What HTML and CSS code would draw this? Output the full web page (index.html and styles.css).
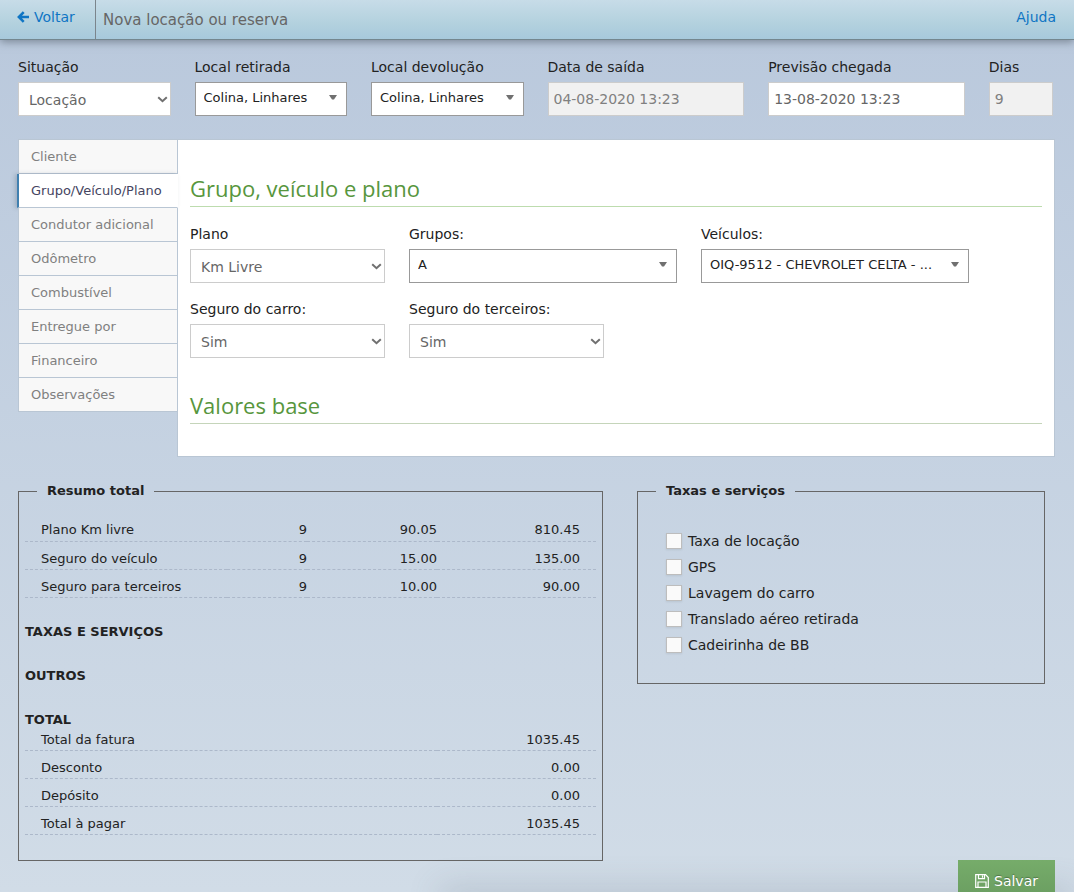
FILE: index.html
```html
<!DOCTYPE html>
<html lang="pt-BR">
<head>
<meta charset="utf-8">
<meta name="viewport" content="width=device-width, initial-scale=1">
<title>Nova locação ou reserva</title>
<link rel="stylesheet" href="styles.css">
</head>
<body>
<svg class="sprite" aria-hidden="true">
  <symbol id="chevron" viewBox="0 0 11 7"><path d="M1.200 1.200 5.500 5.200 9.800 1.200" fill="none" stroke="currentColor" stroke-width="2"/></symbol>
  <symbol id="caret" viewBox="0 0 8 5"><path d="M0 0h8L5 4.500H3z" fill="currentColor"/></symbol>
</svg>

<header class="topbar">
  <a class="back" href="#"><svg viewBox="0 0 12 12" aria-hidden="true"><path d="M12 6H2M6.700 1.200 1.900 6l4.800 4.800" fill="none" stroke="currentColor" stroke-width="2.600"/></svg>Voltar</a>
  <h1 class="page-title">Nova locação ou reserva</h1>
  <a class="help" href="#">Ajuda</a>
</header>

<main>
  <form class="filters">
    <div class="field"><label for="status">Situação</label>
      <div class="select"><select id="status"><option>Locação</option></select><svg class="chevron"><use href="#chevron"/></svg></div></div>
    <div class="field"><label for="pickup">Local retirada</label>
      <div class="select combo"><select id="pickup"><option>Colina, Linhares</option></select><svg class="caret"><use href="#caret"/></svg></div></div>
    <div class="field"><label for="return">Local devolução</label>
      <div class="select combo"><select id="return"><option>Colina, Linhares</option></select><svg class="caret"><use href="#caret"/></svg></div></div>
    <div class="field"><label for="start">Data de saída</label><input id="start" type="text" value="04-08-2020 13:23" disabled></div>
    <div class="field"><label for="end">Previsão chegada</label><input id="end" type="text" value="13-08-2020 13:23"></div>
    <div class="field"><label for="days">Dias</label><input id="days" type="text" value="9" disabled></div>
  </form>

  <div class="editor">
    <nav class="tabs">
      <a href="#">Cliente</a>
      <a href="#" class="active" aria-current="page">Grupo/Veículo/Plano</a>
      <a href="#">Condutor adicional</a>
      <a href="#">Odômetro</a>
      <a href="#">Combustível</a>
      <a href="#">Entregue por</a>
      <a href="#">Financeiro</a>
      <a href="#">Observações</a>
    </nav>
    <section class="panel">
      <h2>Grupo, veículo e plano</h2>
      <div class="panel-grid">
        <div class="field span-3"><label for="plan">Plano</label>
          <div class="select"><select id="plan"><option>Km Livre</option></select><svg class="chevron"><use href="#chevron"/></svg></div></div>
        <div class="field span-4"><label for="group">Grupos:</label>
          <div class="select combo"><select id="group"><option>A</option></select><svg class="caret"><use href="#caret"/></svg></div></div>
        <div class="field span-4"><label for="vehicle">Veículos:</label>
          <div class="select combo"><select id="vehicle"><option>OIQ-9512 - CHEVROLET CELTA - ...</option></select><svg class="caret"><use href="#caret"/></svg></div></div>
        <div class="field span-3 new-row"><label for="car-ins">Seguro do carro:</label>
          <div class="select"><select id="car-ins"><option>Sim</option></select><svg class="chevron"><use href="#chevron"/></svg></div></div>
        <div class="field span-3"><label for="third-ins">Seguro do terceiros:</label>
          <div class="select"><select id="third-ins"><option>Sim</option></select><svg class="chevron"><use href="#chevron"/></svg></div></div>
      </div>
      <h2>Valores base</h2>
    </section>
  </div>

  <div class="bottom">
    <fieldset class="summary">
      <legend>Resumo total</legend>
      <table>
        <tr><td>Plano Km livre</td><td class="qty">9</td><td class="rate">90.05</td><td class="sum">810.45</td></tr>
        <tr><td>Seguro do veículo</td><td class="qty">9</td><td class="rate">15.00</td><td class="sum">135.00</td></tr>
        <tr><td>Seguro para terceiros</td><td class="qty">9</td><td class="rate">10.00</td><td class="sum">90.00</td></tr>
      </table>
      <h3>TAXAS E SERVIÇOS</h3>
      <h3>OUTROS</h3>
      <h3>TOTAL</h3>
      <table class="totals">
        <tr><td>Total da fatura</td><td class="sum">1035.45</td></tr>
        <tr><td>Desconto</td><td class="sum">0.00</td></tr>
        <tr><td>Depósito</td><td class="sum">0.00</td></tr>
        <tr><td>Total à pagar</td><td class="sum">1035.45</td></tr>
      </table>
    </fieldset>

    <fieldset class="fees">
      <legend>Taxas e serviços</legend>
      <label><input type="checkbox">Taxa de locação</label>
      <label><input type="checkbox">GPS</label>
      <label><input type="checkbox">Lavagem do carro</label>
      <label><input type="checkbox">Translado aéreo retirada</label>
      <label><input type="checkbox">Cadeirinha de BB</label>
    </fieldset>
  </div>
</main>

<div class="bottom-shade"></div>
<button class="save" type="button"><svg viewBox="0 0 14 14" aria-hidden="true"><path d="M.7.7h9.800l2.800 2.800v9.800H.7zM3.500.7v4h6v-4M3 13.300V8h8v5.300M7.500 1.500v2.200" fill="none" stroke="currentColor" stroke-width="1.200"/></svg>Salvar</button>
</body>
</html>
```
FILE: styles.css
```css
* { box-sizing: border-box; }

body {
  margin: 0;
  min-height: 100vh;
  font-family: Verdana, "DejaVu Sans", sans-serif;
  font-size: 14px;
  line-height: 20px;
  color: #222;
  background: linear-gradient(#b9c8dc, #d1dce7) no-repeat;
}

.sprite { display: none; }

.topbar {
  display: flex;
  height: 40px;
  padding: 0 18px 0 17px;
  border-bottom: 1px solid #74878f;
  background: linear-gradient(#c7dce8, #b3d1de 60%, #a7c9dc);
  box-shadow: 0 2px 8px rgba(60, 70, 80, .5);
}

.topbar a { color: #0f75c4; text-decoration: none; padding-top: 7px; }
.topbar .back { width: 79px; border-right: 1px solid #7b858c; }
.back svg { width: 12px; height: 12px; margin-right: 5px; vertical-align: -1px; }
.page-title { flex: 1; margin: 0; padding: 10px 0 0 7px; font-size: 15px; line-height: 20px; font-weight: 400; color: #666; }

.filters {
  display: grid;
  grid-template-columns: 4fr 4fr 4fr 5fr 5fr 2fr;
  padding: 17px 9px 0 6px;
}

.field { padding: 0 12px; min-width: 0; }
.field > label { display: block; height: 25px; }

.field input, .select select {
  display: block;
  width: 100%;
  height: 34px;
  margin: 0;
  border: 1px solid #ccc;
  border-radius: 0;
  background: #fff;
  color: #666;
  font: inherit;
}

.field input { padding: 0 5px; }
.field input:disabled { background: #f1f1f1; color: #808080; opacity: 1; }

.select { position: relative; }
.select select { appearance: none; padding: 1px 24px 0 10px; }
.select svg { position: absolute; color: #707070; pointer-events: none; }
.chevron { width: 11px; height: 7px; right: 3px; top: 14px; }
.combo select { border-color: #999; color: #222; font-size: 13px; padding: 0 26px 3px 8px; text-overflow: ellipsis; }
.caret { width: 8px; height: 5px; right: 10px; top: 13px; }

.editor { display: flex; align-items: flex-start; margin: 23px 19px 0 18px; }

.tabs { flex: 0 0 160px; border-top: 1px solid #b9c6d4; position: relative; margin-right: -1px; }
.tabs a {
  display: block;
  height: 34px;
  padding: 7px 12px 0;
  border: solid #b9c6d4;
  border-width: 0 1px 1px;
  background: #f8f8f8;
  color: #808080;
  font-size: 13px;
  text-decoration: none;
}
.tabs .active {
  margin-left: -1px;
  border-left: 2px solid #4080b0;
  border-right-color: #fff;
  background: #fff;
  color: #45455f;
  box-shadow: -2px 0 4px rgba(60, 80, 100, .25);
}

.panel { flex: 1; min-width: 0; border: 1px solid #b9c6d4; background: #fff; padding: 32px 12px; }
.panel h2 {
  margin: 0;
  height: 35px;
  font: 400 22px/32px "Open Sans", sans-serif;
  color: #57963d;
  border-bottom: 1px solid #bddcae;
}
.panel h2:last-child { border-color: #c5d5ba; }
.panel-grid {
  display: grid;
  grid-template-columns: repeat(12, 1fr);
  row-gap: 16px;
  margin: 17px -12px 31px;
}
.span-3 { grid-column: span 3; }
.span-4 { grid-column: span 4; }
.new-row { grid-column: 1 / span 3; }

.bottom {
  display: grid;
  grid-template-columns: 585fr 408fr;
  column-gap: 34px;
  align-items: start;
  margin: 24px 29px 0 18px;
}

fieldset { margin: 0; min-width: 0; border: 1px solid #666; }
legend { margin-left: 12px; padding: 0 10px; font-size: 13px; font-weight: 700; }

.summary { padding: 12px 6px 25px; }
table { width: 100%; border-collapse: collapse; font-size: 13px; table-layout: fixed; }
td { height: 28px; padding: 7px 16px 0; border-bottom: 1px dashed #acb8ca; }
td + td { text-align: right; }
.qty { width: 80px; padding: 7px 0 0; }
.rate { width: 130px; padding: 7px 0 0; }
.sum { width: 159px; }
h3 { margin: 24px 0 0; font-size: 13px; line-height: 20px; }
.totals tr:first-child td { height: 20px; padding-top: 0; }

.fees { padding: 27px 28px 25px; }
.fees legend { margin-left: -10px; }
.fees label { display: flex; align-items: center; gap: 6px; height: 26px; }
.fees input {
  appearance: none;
  flex: none;
  width: 16px;
  height: 16px;
  margin: 0;
  border: 1px solid #bdbdbd;
  background: #fafafa;
  box-shadow: 0 1px 2px rgba(0, 0, 0, .08);
}

.bottom-shade {
  position: fixed;
  left: 440px;
  right: 0;
  bottom: -10px;
  height: 10px;
  box-shadow: 0 0 32px 0 rgba(80, 95, 110, .45);
}

.save {
  position: fixed;
  right: 19px;
  bottom: 0;
  width: 97px;
  height: 32px;
  padding: 10px 0 0;
  border: 0;
  background: linear-gradient(#76ac6a, #6ca062);
  color: #fff;
  font: inherit;
  text-shadow: 0 -1px 1px rgba(0, 0, 0, .3);
}
.save svg { width: 14px; height: 14px; margin-right: 5px; vertical-align: -2px; }
```
